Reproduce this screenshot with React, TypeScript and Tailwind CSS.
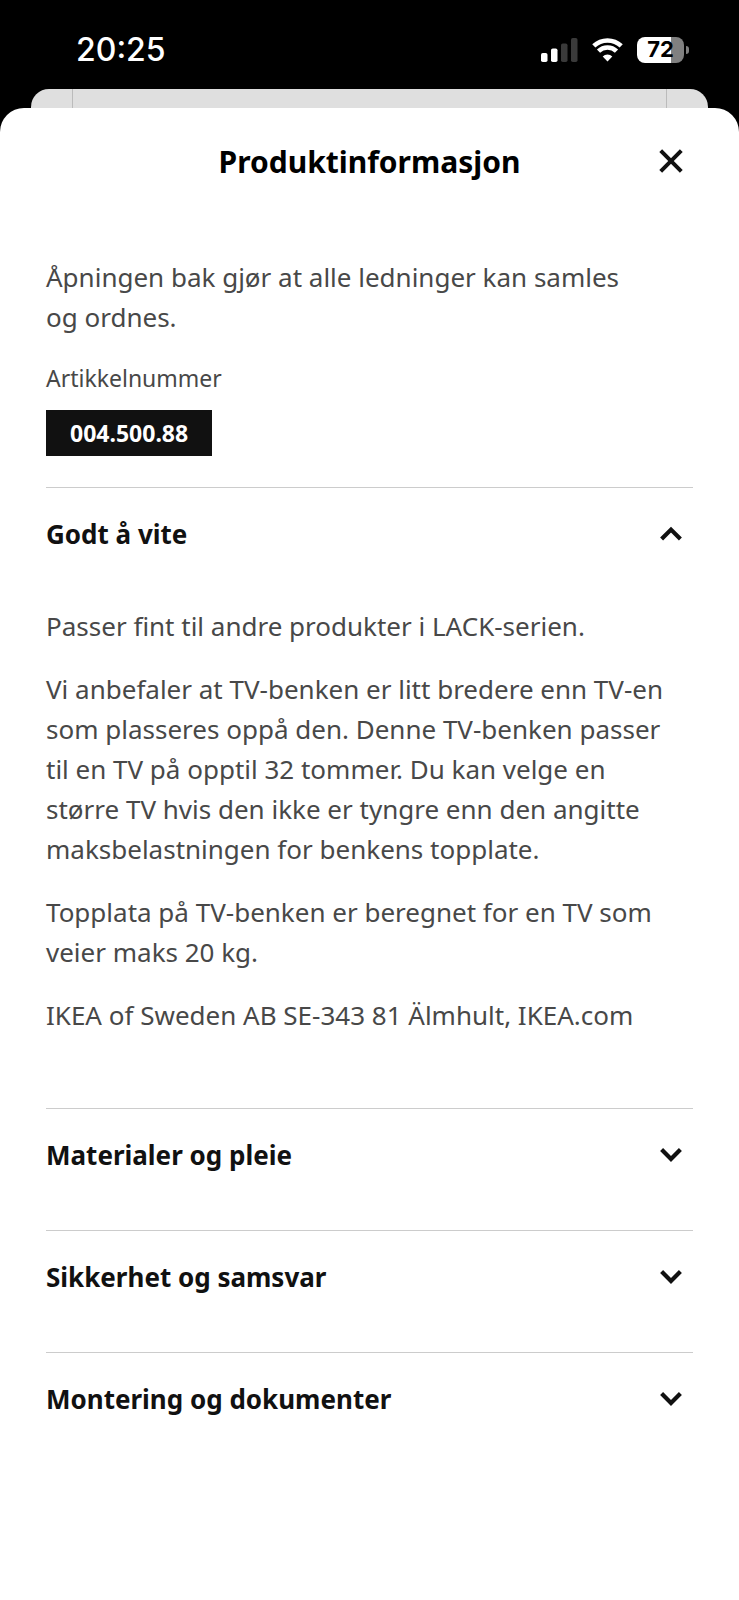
import { useState } from "react";
import type { ReactNode } from "react";

type SectionProps = {
  title: string;
  open: boolean;
  onToggle: () => void;
  children?: ReactNode;
};

const Chevron = ({ up }: { up: boolean }) => (
  <svg
    className="h-6 w-6"
    viewBox="0 0 24 24"
    fill="none"
    stroke="currentColor"
    strokeWidth="4.2"
    aria-hidden="true"
  >
    <path d={up ? "M2.6 17 12 7.6l9.4 9.4" : "M2.6 6.6 12 16l9.4-9.4"} />
  </svg>
);

const Section = ({ title, open, onToggle, children }: SectionProps) => (
  <section className="border-t border-[#cccccc]">
    <h2>
      <button
        type="button"
        aria-expanded={open}
        onClick={onToggle}
        className="flex h-[92px] w-full items-center justify-between pr-[10px] text-left font-bold text-[#111111]"
      >
        {title}
        <Chevron up={open} />
      </button>
    </h2>
    {open ? (
      <div className="space-y-[23px] pt-[26px] pr-3 pb-[73px]">{children}</div>
    ) : (
      <div className="h-[29px]" />
    )}
  </section>
);

const StatusBar = () => (
  <div className="flex h-[89px] items-center justify-between pt-[10px] pr-[50px] pl-[76px] text-white">
    <span className="font-['Inter',sans-serif] text-[32px] font-medium">
      20:25
    </span>
    <div className="flex items-center gap-[14px]">
      <svg className="h-6 w-[37px]" viewBox="0 0 37 24" aria-hidden="true">
        <rect x="0" y="15" width="6.5" height="9" rx="1.8" fill="#fff" />
        <rect x="10" y="10.5" width="6.5" height="13.5" rx="1.8" fill="#fff" />
        <rect x="20" y="5.5" width="6.5" height="18.5" rx="1.8" fill="#3a3a3a" />
        <rect x="30" y="0" width="6.5" height="24" rx="1.8" fill="#3a3a3a" />
      </svg>
      <svg
        className="h-6 w-[31px]"
        viewBox="0 0 31 24"
        fill="none"
        stroke="#fff"
        strokeWidth="4.6"
        aria-hidden="true"
      >
        <path d="M1.8 7.9a20 20 0 0 1 27.4 0" />
        <path d="M6.5 13.1a13 13 0 0 1 18 0" />
        <path
          d="M15.5 23.6l-4.8-5.2a6.8 6.8 0 0 1 9.6 0z"
          fill="#fff"
          stroke="none"
        />
      </svg>
      <div className="flex items-center gap-[2px]">
        <div className="flex h-[26px] w-[47px] items-center justify-center rounded-lg bg-linear-to-r from-white from-72% to-[#808080] to-72% font-['Inter',sans-serif] text-[22px] font-bold text-black">
          72
        </div>
        <div className="h-2 w-[3px] rounded-r-full bg-[#808080]" />
      </div>
    </div>
  </div>
);

const sections = [
  "Materialer og pleie",
  "Sikkerhet og samsvar",
  "Montering og dokumenter",
];

export default function App() {
  const [openSection, setOpenSection] = useState<string | null>("Godt å vite");

  const toggle = (title: string) =>
    setOpenSection(openSection === title ? null : title);

  return (
    <div className="flex min-h-screen flex-col bg-black font-['Noto_Sans',sans-serif] text-[#484848]">
      <StatusBar />
      <div className="mx-[31px] flex h-[19px] justify-between rounded-t-[18px] bg-[#dfdfdf] px-[41px]">
        <div className="w-px bg-[#bbbbbb]" />
        <div className="w-px bg-[#bbbbbb]" />
      </div>
      <main className="grow rounded-t-3xl bg-white px-[46px]">
        <header className="grid h-[106px] grid-cols-[1fr_auto_1fr] items-center">
          <h1 className="col-start-2 text-[30px] font-bold text-black">
            Produktinformasjon
          </h1>
          <button
            type="button"
            aria-label="Lukk"
            className="mr-[10px] justify-self-end text-[#111111]"
          >
            <svg
              className="h-6 w-6"
              viewBox="0 0 24 24"
              stroke="currentColor"
              strokeWidth="4"
              aria-hidden="true"
            >
              <path d="M1.7 1.7l20.6 20.6M22.3 1.7 1.7 22.3" />
            </svg>
          </button>
        </header>

        <div className="pt-[43px] pb-[31px]">
          <p className="pr-12 text-[26px] leading-10">
            Åpningen bak gjør at alle ledninger kan samles og ordnes.
          </p>
          <p className="mt-[25px] text-[23px] leading-8">Artikkelnummer</p>
          <p className="mt-4 w-fit bg-[#111111] px-6 text-[23px] leading-[46px] font-bold text-white">
            004.500.88
          </p>
        </div>

        <div className="text-[26px] leading-10">
          <Section
            title="Godt å vite"
            open={openSection === "Godt å vite"}
            onToggle={() => toggle("Godt å vite")}
          >
            <p>Passer fint til andre produkter i LACK-serien.</p>
            <p>
              Vi anbefaler at TV-benken er litt bredere enn TV-en som plasseres
              oppå den. Denne TV-benken passer til en TV på opptil 32 tommer. Du
              kan velge en større TV hvis den ikke er tyngre enn den angitte
              maksbelastningen for benkens topplate.
            </p>
            <p>
              Topplata på TV-benken er beregnet for en TV som veier maks 20 kg.
            </p>
            <p>IKEA of Sweden AB SE-343 81 Älmhult, IKEA.com</p>
          </Section>
          {sections.map((title) => (
            <Section
              key={title}
              title={title}
              open={openSection === title}
              onToggle={() => toggle(title)}
            />
          ))}
        </div>
      </main>
    </div>
  );
}
